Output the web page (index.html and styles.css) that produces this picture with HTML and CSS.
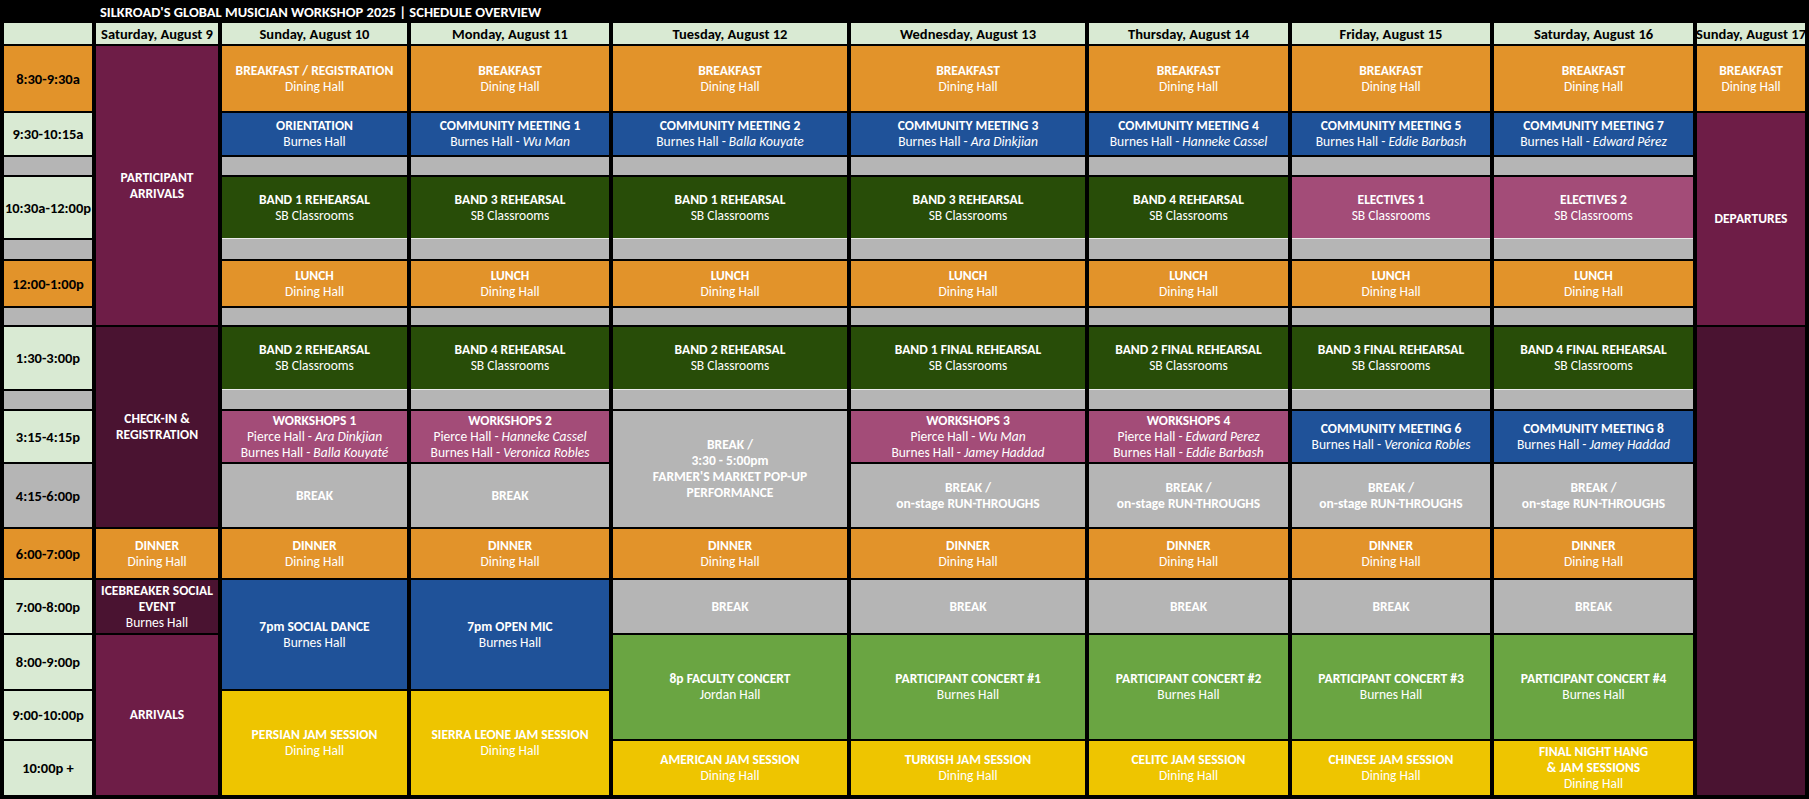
FILE: index.html
```html
<!DOCTYPE html>
<html lang="en">
<head>
<meta charset="utf-8">
<title>Silkroad's Global Musician Workshop 2025 | Schedule Overview</title>
<link rel="stylesheet" href="styles.css">
</head>
<body>
<div class="page">
  <div class="titlebar">
    <div class="title">SILKROAD'S GLOBAL MUSICIAN WORKSHOP 2025 | SCHEDULE OVERVIEW</div>
  </div>
  <div class="sheet">
    <!-- time column -->
    <div class="cell hd"></div>
    <div class="cell tm or">8:30-9:30a</div>
    <div class="cell tm lg">9:30-10:15a</div>
    <div class="cell gy"></div>
    <div class="cell tm lg">10:30a-12:00p</div>
    <div class="cell gy"></div>
    <div class="cell tm or">12:00-1:00p</div>
    <div class="cell gy"></div>
    <div class="cell tm lg">1:30-3:00p</div>
    <div class="cell gy"></div>
    <div class="cell tm lg">3:15-4:15p</div>
    <div class="cell tm gy">4:15-6:00p</div>
    <div class="cell tm or">6:00-7:00p</div>
    <div class="cell tm lg">7:00-8:00p</div>
    <div class="cell tm lg">8:00-9:00p</div>
    <div class="cell tm lg">9:00-10:00p</div>
    <div class="cell tm lg">10:00p +</div>

    <!-- Saturday, August 9 -->
    <div class="cell hd">Saturday, August 9</div>
    <div class="cell mr span7"><b>PARTICIPANT</b><b>ARRIVALS</b></div>
    <div class="cell dm span4 top"><b>CHECK-IN &amp;</b><b>REGISTRATION</b></div>
    <div class="cell or"><b>DINNER</b><span>Dining Hall</span></div>
    <div class="cell dm"><b>ICEBREAKER SOCIAL</b><b>EVENT</b><span>Burnes Hall</span></div>
    <div class="cell mr span3"><b>ARRIVALS</b></div>

    <!-- Sunday, August 10 -->
    <div class="cell hd">Sunday, August 10</div>
    <div class="cell or"><b>BREAKFAST / REGISTRATION</b><span>Dining Hall</span></div>
    <div class="cell bl"><b>ORIENTATION</b><span>Burnes Hall</span></div>
    <div class="cell gy"></div>
    <div class="cell dg"><b>BAND 1 REHEARSAL</b><span>SB Classrooms</span></div>
    <div class="cell gy"></div>
    <div class="cell or"><b>LUNCH</b><span>Dining Hall</span></div>
    <div class="cell gy"></div>
    <div class="cell dg"><b>BAND 2 REHEARSAL</b><span>SB Classrooms</span></div>
    <div class="cell gy"></div>
    <div class="cell pk"><b>WORKSHOPS 1</b><span>Pierce Hall - <i>Ara Dinkjian</i></span><span>Burnes Hall - <i>Balla Kouyaté</i></span></div>
    <div class="cell gy"><b>BREAK</b></div>
    <div class="cell or"><b>DINNER</b><span>Dining Hall</span></div>
    <div class="cell bl span2"><b>7pm SOCIAL DANCE</b><span>Burnes Hall</span></div>
    <div class="cell ye span2"><b>PERSIAN JAM SESSION</b><span>Dining Hall</span></div>

    <!-- Monday, August 11 -->
    <div class="cell hd">Monday, August 11</div>
    <div class="cell or"><b>BREAKFAST</b><span>Dining Hall</span></div>
    <div class="cell bl"><b>COMMUNITY MEETING 1</b><span>Burnes Hall - <i>Wu Man</i></span></div>
    <div class="cell gy"></div>
    <div class="cell dg"><b>BAND 3 REHEARSAL</b><span>SB Classrooms</span></div>
    <div class="cell gy"></div>
    <div class="cell or"><b>LUNCH</b><span>Dining Hall</span></div>
    <div class="cell gy"></div>
    <div class="cell dg"><b>BAND 4 REHEARSAL</b><span>SB Classrooms</span></div>
    <div class="cell gy"></div>
    <div class="cell pk"><b>WORKSHOPS 2</b><span>Pierce Hall - <i>Hanneke Cassel</i></span><span>Burnes Hall - <i>Veronica Robles</i></span></div>
    <div class="cell gy"><b>BREAK</b></div>
    <div class="cell or"><b>DINNER</b><span>Dining Hall</span></div>
    <div class="cell bl span2"><b>7pm OPEN MIC</b><span>Burnes Hall</span></div>
    <div class="cell ye span2"><b>SIERRA LEONE JAM SESSION</b><span>Dining Hall</span></div>

    <!-- Tuesday, August 12 -->
    <div class="cell hd">Tuesday, August 12</div>
    <div class="cell or"><b>BREAKFAST</b><span>Dining Hall</span></div>
    <div class="cell bl"><b>COMMUNITY MEETING 2</b><span>Burnes Hall - <i>Balla Kouyate</i></span></div>
    <div class="cell gy"></div>
    <div class="cell dg"><b>BAND 1 REHEARSAL</b><span>SB Classrooms</span></div>
    <div class="cell gy"></div>
    <div class="cell or"><b>LUNCH</b><span>Dining Hall</span></div>
    <div class="cell gy"></div>
    <div class="cell dg"><b>BAND 2 REHEARSAL</b><span>SB Classrooms</span></div>
    <div class="cell gy"></div>
    <div class="cell gy span2"><b>BREAK /</b><b>3:30 - 5:00pm</b><b>FARMER'S MARKET POP-UP</b><b>PERFORMANCE</b></div>
    <div class="cell or"><b>DINNER</b><span>Dining Hall</span></div>
    <div class="cell gy"><b>BREAK</b></div>
    <div class="cell lgr span2"><b>8p FACULTY CONCERT</b><span>Jordan Hall</span></div>
    <div class="cell ye"><b>AMERICAN JAM SESSION</b><span>Dining Hall</span></div>

    <!-- Wednesday, August 13 -->
    <div class="cell hd">Wednesday, August 13</div>
    <div class="cell or"><b>BREAKFAST</b><span>Dining Hall</span></div>
    <div class="cell bl"><b>COMMUNITY MEETING 3</b><span>Burnes Hall - <i>Ara Dinkjian</i></span></div>
    <div class="cell gy"></div>
    <div class="cell dg"><b>BAND 3 REHEARSAL</b><span>SB Classrooms</span></div>
    <div class="cell gy"></div>
    <div class="cell or"><b>LUNCH</b><span>Dining Hall</span></div>
    <div class="cell gy"></div>
    <div class="cell dg"><b>BAND 1 FINAL REHEARSAL</b><span>SB Classrooms</span></div>
    <div class="cell gy"></div>
    <div class="cell pk"><b>WORKSHOPS 3</b><span>Pierce Hall - <i>Wu Man</i></span><span>Burnes Hall - <i>Jamey Haddad</i></span></div>
    <div class="cell gy"><b>BREAK /</b><b>on-stage RUN-THROUGHS</b></div>
    <div class="cell or"><b>DINNER</b><span>Dining Hall</span></div>
    <div class="cell gy"><b>BREAK</b></div>
    <div class="cell lgr span2"><b>PARTICIPANT CONCERT #1</b><span>Burnes Hall</span></div>
    <div class="cell ye"><b>TURKISH JAM SESSION</b><span>Dining Hall</span></div>

    <!-- Thursday, August 14 -->
    <div class="cell hd">Thursday, August 14</div>
    <div class="cell or"><b>BREAKFAST</b><span>Dining Hall</span></div>
    <div class="cell bl"><b>COMMUNITY MEETING 4</b><span>Burnes Hall - <i>Hanneke Cassel</i></span></div>
    <div class="cell gy"></div>
    <div class="cell dg"><b>BAND 4 REHEARSAL</b><span>SB Classrooms</span></div>
    <div class="cell gy"></div>
    <div class="cell or"><b>LUNCH</b><span>Dining Hall</span></div>
    <div class="cell gy"></div>
    <div class="cell dg"><b>BAND 2 FINAL REHEARSAL</b><span>SB Classrooms</span></div>
    <div class="cell gy"></div>
    <div class="cell pk"><b>WORKSHOPS 4</b><span>Pierce Hall - <i>Edward Perez</i></span><span>Burnes Hall - <i>Eddie Barbash</i></span></div>
    <div class="cell gy"><b>BREAK /</b><b>on-stage RUN-THROUGHS</b></div>
    <div class="cell or"><b>DINNER</b><span>Dining Hall</span></div>
    <div class="cell gy"><b>BREAK</b></div>
    <div class="cell lgr span2"><b>PARTICIPANT CONCERT #2</b><span>Burnes Hall</span></div>
    <div class="cell ye"><b>CELITC JAM SESSION</b><span>Dining Hall</span></div>

    <!-- Friday, August 15 -->
    <div class="cell hd">Friday, August 15</div>
    <div class="cell or"><b>BREAKFAST</b><span>Dining Hall</span></div>
    <div class="cell bl"><b>COMMUNITY MEETING 5</b><span>Burnes Hall - <i>Eddie Barbash</i></span></div>
    <div class="cell gy"></div>
    <div class="cell pk el"><b>ELECTIVES 1</b><span>SB Classrooms</span></div>
    <div class="cell gy"></div>
    <div class="cell or"><b>LUNCH</b><span>Dining Hall</span></div>
    <div class="cell gy"></div>
    <div class="cell dg"><b>BAND 3 FINAL REHEARSAL</b><span>SB Classrooms</span></div>
    <div class="cell gy"></div>
    <div class="cell bl"><b>COMMUNITY MEETING 6</b><span>Burnes Hall - <i>Veronica Robles</i></span></div>
    <div class="cell gy"><b>BREAK /</b><b>on-stage RUN-THROUGHS</b></div>
    <div class="cell or"><b>DINNER</b><span>Dining Hall</span></div>
    <div class="cell gy"><b>BREAK</b></div>
    <div class="cell lgr span2"><b>PARTICIPANT CONCERT #3</b><span>Burnes Hall</span></div>
    <div class="cell ye"><b>CHINESE JAM SESSION</b><span>Dining Hall</span></div>

    <!-- Saturday, August 16 -->
    <div class="cell hd">Saturday, August 16</div>
    <div class="cell or"><b>BREAKFAST</b><span>Dining Hall</span></div>
    <div class="cell bl"><b>COMMUNITY MEETING 7</b><span>Burnes Hall - <i>Edward Pérez</i></span></div>
    <div class="cell gy"></div>
    <div class="cell pk el"><b>ELECTIVES 2</b><span>SB Classrooms</span></div>
    <div class="cell gy"></div>
    <div class="cell or"><b>LUNCH</b><span>Dining Hall</span></div>
    <div class="cell gy"></div>
    <div class="cell dg"><b>BAND 4 FINAL REHEARSAL</b><span>SB Classrooms</span></div>
    <div class="cell gy"></div>
    <div class="cell bl"><b>COMMUNITY MEETING 8</b><span>Burnes Hall - <i>Jamey Haddad</i></span></div>
    <div class="cell gy"><b>BREAK /</b><b>on-stage RUN-THROUGHS</b></div>
    <div class="cell or"><b>DINNER</b><span>Dining Hall</span></div>
    <div class="cell gy"><b>BREAK</b></div>
    <div class="cell lgr span2"><b>PARTICIPANT CONCERT #4</b><span>Burnes Hall</span></div>
    <div class="cell ye"><b>FINAL NIGHT HANG</b><b>&amp; JAM SESSIONS</b><span>Dining Hall</span></div>

    <!-- Sunday, August 17 -->
    <div class="cell hd">Sunday, August 17</div>
    <div class="cell or"><b>BREAKFAST</b><span>Dining Hall</span></div>
    <div class="cell mr span6"><b>DEPARTURES</b></div>
    <div class="cell dm span9"></div>
  </div>
</div>
</body>
</html>
```

FILE: styles.css
```css
* {
  box-sizing: border-box;
}

html,
body {
  margin: 0;
  padding: 0;
  background: #000;
}

body {
  width: 1809px;
  height: 799px;
  overflow: hidden;
  font-family: Carlito, Calibri, "Liberation Sans Narrow", "Open Sans", sans-serif;
  font-size: 13.5px;
  line-height: 16px;
  color: #fff;
}

.page {
  display: flex;
  flex-direction: column;
}

.titlebar {
  height: 23px;
  display: flex;
  align-items: center;
  padding-left: 100px;
}

.title {
  font-size: 14.5px;
  font-weight: 700;
  color: #fff;
  white-space: nowrap;
}

.sheet {
  display: grid;
  grid-auto-flow: column;
  grid-template-columns: 88px 122px 185px 198px 234px 234px 199px 198px 199px 108px;
  grid-template-rows: 21px 65px 42px 18px 61px 19px 45px 17px 62px 18px 51px 63px 49px 53px 54px 48px 54px;
  column-gap: 4px;
  row-gap: 2px;
  padding: 0 0 4px 4px;
}

.cell {
  display: flex;
  flex-direction: column;
  align-items: center;
  justify-content: center;
  text-align: center;
  white-space: nowrap;
  overflow: hidden;
}

.cell b {
  font-weight: 700;
}

.cell i {
  font-style: italic;
}

.span2 { grid-row: span 2; }
.span3 { grid-row: span 3; }
.span4 { grid-row: span 4; }
.span6 { grid-row: span 6; }
.span7 { grid-row: span 7; }
.span9 { grid-row: span 9; }

.hd {
  background: #d9ead3;
  color: #000;
  font-size: 14.5px;
  font-weight: 700;
}

.tm {
  color: #000;
  font-size: 14.5px;
  font-weight: 700;
}

.lg { background: #d9ead3; }
.or { background: #e2932a; }
.gy { background: #b5b5b5; }
.bl { background: #1f5299; }
.dg { background: #284d08; }
.pk { background: #a34c78; }
.mr { background: #6e1d47; }
.dm { background: #4a1331; }
.lgr { background: #6aa542; }
.ye { background: #eec500; }

.dg,
.el {
  box-shadow: 0 1px 0 #ececec, 0 2px 0 #b5b5b5;
}
```
